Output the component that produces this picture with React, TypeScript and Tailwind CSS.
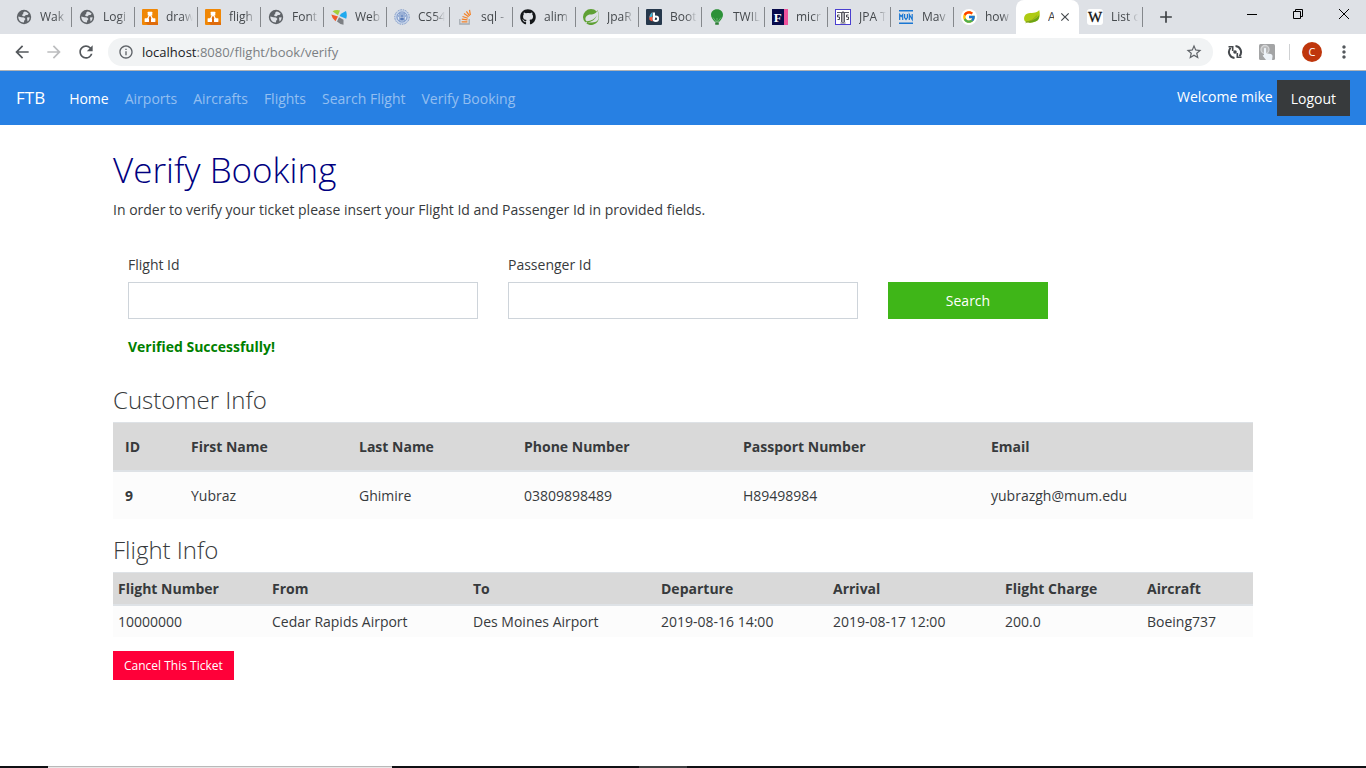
import React from 'react';
import { FaGithub } from 'react-icons/fa';
import { FcGoogle } from 'react-icons/fc';
import { SiSpring } from 'react-icons/si';
import {
  MdAdd,
  MdArrowBack,
  MdArrowForward,
  MdClose,
  MdInfoOutline,
  MdMoreVert,
  MdRefresh,
  MdStarBorder,
} from 'react-icons/md';

function Icon({ children }: { children: React.ReactNode }) {
  return (
    <svg viewBox="0 0 16 16" className="size-4 shrink-0" aria-hidden="true">
      {children}
    </svg>
  );
}

const GlobeIcon = () => (
  <Icon>
    <circle cx="8" cy="8" r="7.2" fill="#5f6368" />
    <path d="M8.6 2.4c1.6.2 3.1 1 4.1 2.3l-1.2 1.2-1.8.2-.8 1.2H7L5.8 6.1 7.3 5l-.2-1.3z" fill="#dee1e6" />
    <path d="M2.3 7.6l2.9.6 2.8.3 1.5 1.6-1.2 1.5-.5 1.9C4.5 13.7 2.2 11 2.3 7.6z" fill="#dee1e6" />
    <path d="M11 8.6l2.6-.4c0 1.8-.8 3.3-2 4.3l-.3-1.7z" fill="#dee1e6" />
  </Icon>
);

const DrawIoIcon = () => (
  <Icon>
    <rect width="16" height="16" rx="1" fill="#f08705" />
    <path d="M8 6L16 14v2H6l-3-3z" fill="#df6c0c" />
    <path d="M8 5l-3 6M8 5l3 6" stroke="#fff" strokeWidth="1.3" />
    <rect x="5.7" y="2.8" width="4.6" height="3.8" rx=".5" fill="#fff" />
    <rect x="2.6" y="9.3" width="4.4" height="3.8" rx=".5" fill="#fff" />
    <rect x="9" y="9.3" width="4.4" height="3.8" rx=".5" fill="#fff" />
  </Icon>
);

const PinwheelIcon = () => (
  <Icon>
    <path d="M1.5 2.2Q5 .3 9 1.5L7 6.3 4.5 4.5z" fill="#a4cf3a" />
    <path d="M10 4.8L15 2q1.5 4 .2 7.8L8.5 7z" fill="#1fa9ee" />
    <path d="M.3 5.5L7 7.5 4.5 12.3Q1 9.5 .3 5.5z" fill="#f0592a" />
    <path d="M8 8.2l4.5 2.5v5Q8.5 15 6 12.5z" fill="#7d8084" />
  </Icon>
);

const SealIcon = () => (
  <Icon>
    <circle cx="8" cy="8" r="7.3" fill="#c6d3e8" stroke="#7d98c8" strokeDasharray="1.5 1" />
    <circle cx="8" cy="8" r="5" fill="#dbe4f1" stroke="#5e80bc" strokeWidth=".8" />
    <path d="M4 7h8M5 5h2m2 0h2M8 4v8M5 10h6M5.5 8.5l5 3M10.5 8.5l-5 3" stroke="#4d72b5" strokeWidth=".9" />
  </Icon>
);

const StackOverflowIcon = () => (
  <Icon>
    <path d="M2.8 10v5h9.4v-5" fill="none" stroke="#a5abb1" strokeWidth="1.3" />
    <path d="M4.6 12.8h5.8M4.8 10.2l5.7.7M5.5 7.5l5.3 1.8M7 4.6l4.6 3.2M9.4 2.3l3.2 4.6M12.5.8l.9 5.4" stroke="#f48024" strokeWidth="1.2" />
  </Icon>
);

const BootstrapTabIcon = () => (
  <Icon>
    <rect width="16" height="16" rx="1" fill="#26384c" />
    <path d="M6.5 3v9.5L3.5 11Q2.2 7 6.5 3z" fill="#ff5a3c" />
    <path d="M6.5 3v4.5L3.2 8.5Q3.500 5 6.500 3z" fill="#3db8d8" />
    <path d="M8 3.500v6.8" stroke="#fff" strokeWidth="2" />
    <circle cx="9.8" cy="9.8" r="2.3" fill="none" stroke="#fff" strokeWidth="2" />
  </Icon>
);

const BalloonIcon = () => (
  <Icon>
    <path d="M8 .3c3.7 0 6 2.500 6 5.500 0 2.700-2 5-3.700 7H5.700C4 10.800 2 8.500 2 5.800 2 2.800 4.300.3 8 .3z" fill="#2c9138" />
    <path d="M4 8.500l3 4m5-4l-3 4M8 9v4" stroke="#8fcb93" strokeWidth=".6" />
    <rect x="6.2" y="13.2" width="3.6" height="2.6" rx=".5" fill="#2c7d35" />
  </Icon>
);

const FTabIcon = () => (
  <Icon>
    <rect width="12" height="16" fill="#070a4b" />
    <rect x="12" width="4" height="16" fill="#f0529c" />
    <text x="1.8" y="12.5" fill="#fff" fontFamily="Liberation Serif, serif" fontWeight="700" fontSize="13">F</text>
  </Icon>
);

const ScalesIcon = () => (
  <Icon>
    <rect x=".5" y=".5" width="15" height="15" fill="#fff" stroke="#4a3fd0" />
    <path d="M2 3.500h12M8 2v12M5.500 14h5M6.500 4v9M9.500 4v9" stroke="#4a4a55" strokeWidth=".9" />
    <path d="M4.500 6H2.500v2h2v2.500h-2M13.500 6h-2v2h2v2.500h-2" fill="none" stroke="#33333d" strokeWidth=".9" />
  </Icon>
);

const MavenIcon = () => (
  <Icon>
    <path d="M1 1.800h14M1 14.200h14" stroke="#1976d2" strokeWidth="1.6" />
    <path d="M1.700 11V5.500l1.500 2 1.500-2V11M6.600 5v3.500l1.400 2 1.400-2V5M11.300 11V5.500l2.900 5V5" fill="none" stroke="#1976d2" strokeWidth="1.2" />
  </Icon>
);

const SpringIcon = () => <SiSpring className="size-4 shrink-0 text-[#5fa134]" />;
const GithubIcon = () => <FaGithub className="size-4 shrink-0 text-[#14171a]" />;

const GoogleIcon = () => (
  <span className="flex size-4 shrink-0 items-center justify-center rounded-full bg-white">
    <FcGoogle className="size-3.5" />
  </span>
);

const LeafIcon = () => (
  <Icon>
    <path d="M15.200 1c1.200 5 .7 9.500-3.200 11.300C8.500 14 4 14.200 1.300 12.500-.8 10.500-.2 6.200 3 4.800 7 3.200 12.500 4.800 15.200 1z" fill="#aecb12" />
    <path d="M15.200 6c0 3.500-1.200 5.500-3.200 6.300C8.500 14 4 14.200 1.300 12.500 6.500 12.500 12 10.500 15.200 6z" fill="#6aa316" />
    <path d="M1.500 13.800Q9 12 13.200 6.500" fill="none" stroke="#8a9c21" strokeWidth=".8" />
  </Icon>
);

const WikipediaIcon = () => (
  <Icon>
    <rect width="16" height="16" rx="3" fill="#fff" />
    <text x="8" y="13" textAnchor="middle" fill="#111" fontFamily="Liberation Serif, serif" stroke="#111" strokeWidth=".3" fontSize="15">W</text>
  </Icon>
);

type Tab = { title: string; icon: () => React.JSX.Element; active?: boolean };

const tabs: Tab[] = [
  { title: 'Wak', icon: GlobeIcon },
  { title: 'Logi', icon: GlobeIcon },
  { title: 'draw', icon: DrawIoIcon },
  { title: 'fligh', icon: DrawIoIcon },
  { title: 'Font', icon: GlobeIcon },
  { title: 'Web', icon: PinwheelIcon },
  { title: 'CS54', icon: SealIcon },
  { title: 'sql -', icon: StackOverflowIcon },
  { title: 'alim', icon: GithubIcon },
  { title: 'JpaR', icon: SpringIcon },
  { title: 'Boot', icon: BootstrapTabIcon },
  { title: 'TWIL', icon: BalloonIcon },
  { title: 'micr', icon: FTabIcon },
  { title: 'JPA T', icon: ScalesIcon },
  { title: 'Mav', icon: MavenIcon },
  { title: 'how', icon: GoogleIcon },
  { title: 'A', icon: LeafIcon, active: true },
  { title: 'List o', icon: WikipediaIcon },
];

function BrowserTab({ tab, beforeActive }: { tab: Tab; beforeActive: boolean }) {
  const TabIcon = tab.icon;
  if (tab.active) {
    return (
      <div className="flex h-full w-[63px] items-center rounded-t-lg bg-white pl-2">
        <TabIcon />
        <span className="ml-2 w-1.5 overflow-hidden text-xs whitespace-nowrap text-[#3c4043]">{tab.title}</span>
        <button type="button" aria-label="Close tab" className="ml-1 text-[#45494d]">
          <MdClose className="size-3.5" />
        </button>
      </div>
    );
  }
  return (
    <div className="flex h-full w-[63px] items-center pl-2">
      <TabIcon />
      <span className="ml-2 w-[27px] overflow-hidden mask-r-from-60% text-xs whitespace-nowrap text-[#45494d]">
        {tab.title}
      </span>
      <span className={beforeActive ? 'hidden' : '-mr-px ml-auto h-5 w-px bg-[#85888c]'} />
    </div>
  );
}

function BrowserChrome() {
  return (
    <header className="font-['Open_Sans','Noto_Sans',sans-serif]">
      <div className="flex h-[34px] items-center bg-[#dee1e6] pl-2">
        {tabs.map((tab, i) => (
          <BrowserTab key={i} tab={tab} beforeActive={Boolean(tabs[i + 1]?.active)} />
        ))}
        <button type="button" aria-label="New tab" className="ml-3.5 text-[#3c4043]">
          <MdAdd className="size-5" />
        </button>
        <div className="mr-4 mb-1.5 ml-auto flex items-center gap-[34px] text-black">
          <button type="button" aria-label="Minimize">
            <svg viewBox="0 0 12 12" className="size-3" fill="none" stroke="currentColor">
              <path d="M1 6.500h10" />
            </svg>
          </button>
          <button type="button" aria-label="Restore">
            <svg viewBox="0 0 12 12" className="size-3" fill="none" stroke="currentColor">
              <path d="M1.500 3.500h7v7h-7zM3.500 3.500v-2h7v7h-2" />
            </svg>
          </button>
          <button type="button" aria-label="Close window">
            <svg viewBox="0 0 12 12" className="size-3" fill="none" stroke="currentColor">
              <path d="M1 1l10 10M11 1L1 11" />
            </svg>
          </button>
        </div>
      </div>
      <div className="flex h-[37px] items-center border-b border-[#b0b3b6] bg-white pr-3 pl-3">
        <button type="button" aria-label="Back" className="mr-3 text-[#54585c]">
          <MdArrowBack className="size-5" />
        </button>
        <button type="button" aria-label="Forward" className="mr-3 text-[#bcbdbf]">
          <MdArrowForward className="size-5" />
        </button>
        <button type="button" aria-label="Reload" className="mr-3 text-[#54585c]">
          <MdRefresh className="size-5" />
        </button>
        <div className="flex h-7 flex-1 items-center rounded-full bg-[#f1f3f4] pr-2.5 pl-2.5 text-[#5f6368]">
          <MdInfoOutline className="size-4" />
          <span className="ml-2 flex-1 text-[13px] text-[#7b7f83]">
            <span className="text-[#202124]">localhost</span>:8080/flight/book/verify
          </span>
          <button type="button" aria-label="Bookmark this page">
            <MdStarBorder className="size-[18px]" />
          </button>
        </div>
        <button type="button" aria-label="Reload extension" className="ml-3.5">
          <svg viewBox="0 0 16 16" className="size-4" fill="none" stroke="#45494d" strokeWidth="2">
            <path d="M7.500 14A6 6 0 0 1 3.600 3.900M8.500 2A6 6 0 0 1 12.400 12.100" />
            <path d="M1.500 2.800h4.200v4.200M14.500 13.200h-4.200v-4.200" strokeWidth="1.600" />
            <circle cx="8" cy="8" r="1.800" fill="#45494d" stroke="none" />
          </svg>
        </button>
        <button type="button" aria-label="Touch extension" className="ml-4">
          <svg viewBox="0 0 16 16" className="size-4">
            <rect width="16" height="16" rx="1.5" fill="#a3a4a5" />
            <circle cx="6" cy="5.5" r="4" fill="#b9babb" stroke="#d5d6d7" strokeWidth="1.3" />
            <path d="M5 4.500q1-1.500 2 0v4.700l4.800.8q2 .4 1.700 2.500L13 16H7l-3.300-4.300q.3-1.200 1.300-.5z" fill="#eef3f8" />
          </svg>
        </button>
        <span className="ml-3.5 h-4 w-px bg-[#cfd1d3]" />
        <button type="button" aria-label="Profile" className="ml-3 size-5 rounded-full bg-[#bf360c] text-[11px] leading-5 text-white">
          C
        </button>
        <button type="button" aria-label="Menu" className="ml-3 text-[#54585c]">
          <MdMoreVert className="size-5" />
        </button>
      </div>
    </header>
  );
}

const links = ['Airports', 'Aircrafts', 'Flights', 'Search Flight', 'Verify Booking'];

function Navbar() {
  return (
    <nav className="flex h-[54px] items-center bg-[#2780e3] px-4 text-sm text-white">
      <a href="#" className="mr-6 text-[17px]">FTB</a>
      <div className="flex flex-1 gap-4 pt-0.5">
        <a href="#">Home</a>
        {links.map((label) => (
          <a key={label} href="#" className="text-white/50">{label}</a>
        ))}
      </div>
      <span className="mr-1 mb-0.5">Welcome mike</span>
      <button type="button" className="h-9 bg-[#373a3c] px-3.5 pt-0.5">Logout</button>
    </nav>
  );
}

type Column = { name: string; value: string; width: string };

const customer: Column[] = [
  { name: 'ID', value: '9', width: 'w-[66px]' },
  { name: 'First Name', value: 'Yubraz', width: 'w-[168px]' },
  { name: 'Last Name', value: 'Ghimire', width: 'w-[165px]' },
  { name: 'Phone Number', value: '03809898489', width: 'w-[219px]' },
  { name: 'Passport Number', value: 'H89498984', width: 'w-[248px]' },
  { name: 'Email', value: 'yubrazgh@mum.edu', width: 'w-[274px]' },
];

const flight: Column[] = [
  { name: 'Flight Number', value: '10000000', width: 'w-[154px]' },
  { name: 'From', value: 'Cedar Rapids Airport', width: 'w-[201px]' },
  { name: 'To', value: 'Des Moines Airport', width: 'w-[188px]' },
  { name: 'Departure', value: '2019-08-16 14:00', width: 'w-[172px]' },
  { name: 'Arrival', value: '2019-08-17 12:00', width: 'w-[172px]' },
  { name: 'Flight Charge', value: '200.0', width: 'w-[142px]' },
  { name: 'Aircraft', value: 'Boeing737', width: 'w-[111px]' },
];

function InfoTable({ columns, cell, boldFirst }: { columns: Column[]; cell: string; boldFirst?: boolean }) {
  return (
    <table className="w-full table-fixed border-collapse text-left">
      <thead className="border-t border-b-2 border-[#dee2e6] bg-[#d9d9d9]">
        <tr>
          {columns.map((c) => (
            <th key={c.name} scope="col" className={`${c.width} ${cell} font-bold`}>{c.name}</th>
          ))}
        </tr>
      </thead>
      <tbody className="bg-[#fcfcfc]">
        <tr>
          {columns.map((c, i) =>
            boldFirst && i === 0 ? (
              <th key={c.name} scope="row" className={`${cell} font-bold`}>{c.value}</th>
            ) : (
              <td key={c.name} className={cell}>{c.value}</td>
            ),
          )}
        </tr>
      </tbody>
    </table>
  );
}

function Field({ id, label }: { id: string; label: string }) {
  return (
    <div className="w-[350px]">
      <label htmlFor={id} className="mb-1.5 block">{label}</label>
      <input id={id} type="text" className="block h-[37px] w-full border border-[#ced4da] bg-white px-3" />
    </div>
  );
}

export default function App() {
  return (
    <div className="flex min-h-screen flex-col bg-white font-['Open_Sans','Noto_Sans',sans-serif] text-sm text-[#373a3c]">
      <BrowserChrome />
      <Navbar />
      <main className="mx-auto w-full max-w-[1140px] flex-1 pt-5 leading-[22px]">
        <h1 className="text-[35px] leading-[50px] font-light text-[#000080]">Verify Booking</h1>
        <p className="mt-1">In order to verify your ticket please insert your Flight Id and Passenger Id in provided fields.</p>
        <form className="mt-[33px] flex items-end gap-[30px] pl-[15px]" onSubmit={(e) => e.preventDefault()}>
          <Field id="flight-id" label="Flight Id" />
          <Field id="passenger-id" label="Passenger Id" />
          <button type="submit" className="h-[37px] w-40 bg-[#3fb618] text-white">Search</button>
        </form>
        <p className="mt-[17px] pl-[15px] font-bold text-[#008000]">Verified Successfully!</p>
        <h2 className="mt-7 mb-2 text-2xl leading-7 font-light">Customer Info</h2>
        <InfoTable columns={customer} cell="p-3 leading-[23px]" boldFirst />
        <h2 className="mt-[17px] mb-2 text-2xl leading-7 font-light">Flight Info</h2>
        <InfoTable columns={flight} cell="p-[5px] leading-[21px]" />
        <button type="button" className="mt-3.5 h-[29px] bg-[#ff0039] px-[11px] text-xs text-white">Cancel This Ticket</button>
      </main>
      <footer className="flex h-0.5 bg-[#101114]">
        <span className="ml-12 w-[344px] border-t border-[#b9b9b9] bg-[#e8e8e8]" />
        <span className="ml-[247px] w-12 bg-[#404143]" />
      </footer>
    </div>
  );
}
